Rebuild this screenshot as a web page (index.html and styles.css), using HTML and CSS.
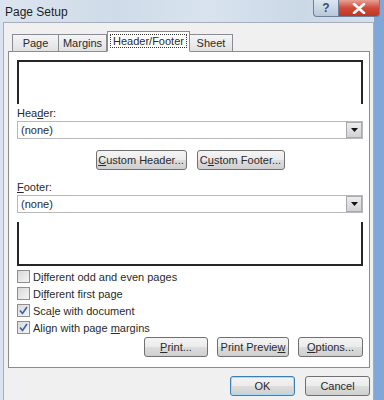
FILE: index.html
```html
<!DOCTYPE html>
<html lang="en">
<head>
  <meta charset="UTF-8" />
  <title>Page Setup</title>
  <link rel="stylesheet" href="styles.css">
</head>
<body>
  <div class="window">
    <div class="titlebar">
      <span class="title">Page Setup</span>
      <div class="caption-buttons">
        <div class="cap help">?</div>
        <div class="cap close">
          <svg width="14" height="11" viewBox="0 0 14 11"><path d="M2 1 L12 10 M12 1 L2 10" stroke="#fff" stroke-width="2.6" stroke-linecap="round"/></svg>
        </div>
      </div>
    </div>

    <div class="dialog">
      <div class="tabs">
        <div class="tab tab-page">Page</div>
        <div class="tab tab-margins">Margins</div>
        <div class="tab tab-hf active"><span class="focus">Header/Footer</span></div>
        <div class="tab tab-sheet">Sheet</div>
      </div>

      <div class="panel">
        <div class="preview preview-top"></div>

        <div class="label">Hea<u>d</u>er:</div>
        <div class="select">
          <span>(none)</span>
          <div class="drop"><svg width="7" height="4" viewBox="0 0 7 4"><path d="M0 0 H7 L3.5 4 Z" fill="#111"/></svg></div>
        </div>

        <div class="custom-row">
          <button class="btn btn-custom-h"><u>C</u>ustom Header...</button>
          <button class="btn btn-custom-f">C<u>u</u>stom Footer...</button>
        </div>

        <div class="label label-footer"><u>F</u>ooter:</div>
        <div class="select">
          <span>(none)</span>
          <div class="drop"><svg width="7" height="4" viewBox="0 0 7 4"><path d="M0 0 H7 L3.5 4 Z" fill="#111"/></svg></div>
        </div>

        <div class="preview preview-bottom"></div>

        <div class="checks">
          <div class="check"><span class="box"></span><span>D<u>i</u>fferent odd and even pages</span></div>
          <div class="check"><span class="box"></span><span>Di<u>f</u>ferent first page</span></div>
          <div class="check"><span class="box"><svg width="9" height="9" viewBox="0 0 9 9"><path d="M1 4.5 L3.5 7.5 L8 1" fill="none" stroke="#3d5ea8" stroke-width="1.6"/></svg></span><span>Sca<u>l</u>e with document</span></div>
          <div class="check"><span class="box"><svg width="9" height="9" viewBox="0 0 9 9"><path d="M1 4.5 L3.5 7.5 L8 1" fill="none" stroke="#3d5ea8" stroke-width="1.6"/></svg></span><span>Align with page <u>m</u>argins</span></div>
        </div>

        <div class="panel-buttons">
          <button class="btn btn-print"><u>P</u>rint...</button>
          <button class="btn btn-preview">Print Previe<u>w</u></button>
          <button class="btn btn-options"><u>O</u>ptions...</button>
        </div>
      </div>

      <div class="dialog-buttons">
        <button class="btn btn-ok default">OK</button>
        <button class="btn btn-cancel">Cancel</button>
      </div>
    </div>
  </div>
</body>
</html>
```

FILE: styles.css
```css
body {
  margin: 0;
  width: 384px;
  height: 400px;
  overflow: hidden;
  font-family: "Liberation Sans", Arial, sans-serif;
  font-size: 11px;
  color: #2a2a2a;
  background: #d9e4f0;
}

.window {
  width: 384px;
  height: 400px;
  box-sizing: border-box;
  padding-left: 3px;
  border-right: 10px solid #7fa8d8;
  display: flex;
  flex-direction: column;
}

/* title bar */
.titlebar {
  height: 22px;
  display: flex;
  align-items: flex-start;
  justify-content: space-between;
  background: linear-gradient(90deg, #dbe5f0 0%, #cfdbe8 30%, #d8e3ef 55%, #cbd8e6 80%, #d4e0ec 100%);
}

.title {
  font-size: 12px;
  padding: 5px 0 0 2px;
  color: #1e1e1e;
}

.caption-buttons {
  display: flex;
  margin-right: -6px;
  position: relative;
  z-index: 2;
}

.cap {
  height: 16px;
  display: flex;
  align-items: center;
  justify-content: center;
  border: 1px solid #6d7f99;
  border-top: none;
}

.help {
  width: 24px;
  border-radius: 0 0 0 4px;
  background: linear-gradient(#dde6f1, #b7c7da);
  color: #3b4f6b;
  font-size: 12px;
  font-weight: bold;
}

.close {
  width: 40px;
  border-left: none;
  border-radius: 0 0 4px 0;
  background: linear-gradient(#e8a196, #cf4a3a 50%, #c13524);
}

/* dialog body */
.dialog {
  flex: 1;
  background: #f0f0f0;
  border: 1px solid #a5aebb;
  border-bottom: none;
  padding: 8px 3px 0 4px;
}

.tabs {
  display: flex;
  align-items: flex-end;
  padding-left: 4px;
  margin-bottom: -1px;
  position: relative;
  z-index: 1;
}

.tab {
  height: 16px;
  line-height: 16px;
  border: 1px solid #898c95;
  border-right: none;
  background: linear-gradient(#f5f5f5, #e2e2e2);
  text-align: center;
}

.tab-page {
  width: 45px;
}

.tab-margins {
  width: 47px;
  border-right: 1px solid #898c95;
}

.tab-hf {
  padding: 0 2px;
}

.tab-sheet {
  width: 42px;
  border-left: none;
  border-right: 1px solid #898c95;
}

.tab.active {
  height: 19px;
  line-height: 18px;
  background: #fff;
  border: 1px solid #898c95;
  border-bottom-color: #fff;
}

.focus {
  border: 1px dotted #333;
  padding: 0 2px;
}

.panel {
  background: #fff;
  border: 1px solid #898c95;
  padding: 8px 6px 10px 8px;
  display: flex;
  flex-direction: column;
}

.preview {
  height: 42px;
  border: 2px solid #262626;
}

.preview-top {
  border-bottom: none;
}

.preview-bottom {
  border-top: none;
  margin-top: 9px;
}

.label {
  height: 16px;
  line-height: 16px;
  margin-top: 1px;
}

.label-footer {
  margin-top: 9px;
}

.select {
  height: 18px;
  box-sizing: border-box;
  border: 1px solid #b7b9bf;
  display: flex;
  align-items: center;
  justify-content: space-between;
  padding-left: 3px;
}

.drop {
  width: 16px;
  height: 16px;
  box-sizing: border-box;
  border: 1px solid #a9aab0;
  background: linear-gradient(#ececec, #d2d2d2);
  display: flex;
  align-items: center;
  justify-content: center;
}

.btn {
  font-family: inherit;
  font-size: 11px;
  color: #2a2a2a;
  height: 20px;
  padding: 0;
  border: 1px solid #707070;
  border-radius: 3px;
  background: linear-gradient(#f4f4f4 0%, #ebebeb 50%, #dddddd 51%, #cfcfcf 100%);
}

.custom-row {
  display: flex;
  justify-content: center;
  gap: 10px;
  margin-top: 11px;
}

.btn-custom-h {
  width: 91px;
}

.btn-custom-f {
  width: 88px;
}

.checks {
  margin-top: 2px;
  display: flex;
  flex-direction: column;
}

.check {
  height: 17px;
  display: flex;
  align-items: center;
  gap: 3px;
}

.box {
  width: 11px;
  height: 11px;
  border: 1px solid #8f8f8f;
  background: linear-gradient(135deg, #d9d9d9, #f4f4f4);
  display: flex;
  align-items: center;
  justify-content: center;
}

.panel-buttons {
  display: flex;
  justify-content: flex-end;
  gap: 9px;
  margin-top: 1px;
}

.btn-print {
  width: 64px;
}

.btn-preview {
  width: 72px;
}

.btn-options {
  width: 65px;
}

.dialog-buttons {
  display: flex;
  justify-content: flex-end;
  gap: 10px;
  margin-top: 8px;
}

.btn-ok,
.btn-cancel {
  width: 65px;
}

.btn.default {
  border-color: #3c7fb1;
  box-shadow: inset 0 0 0 1px #a8dcf5;
}
```
